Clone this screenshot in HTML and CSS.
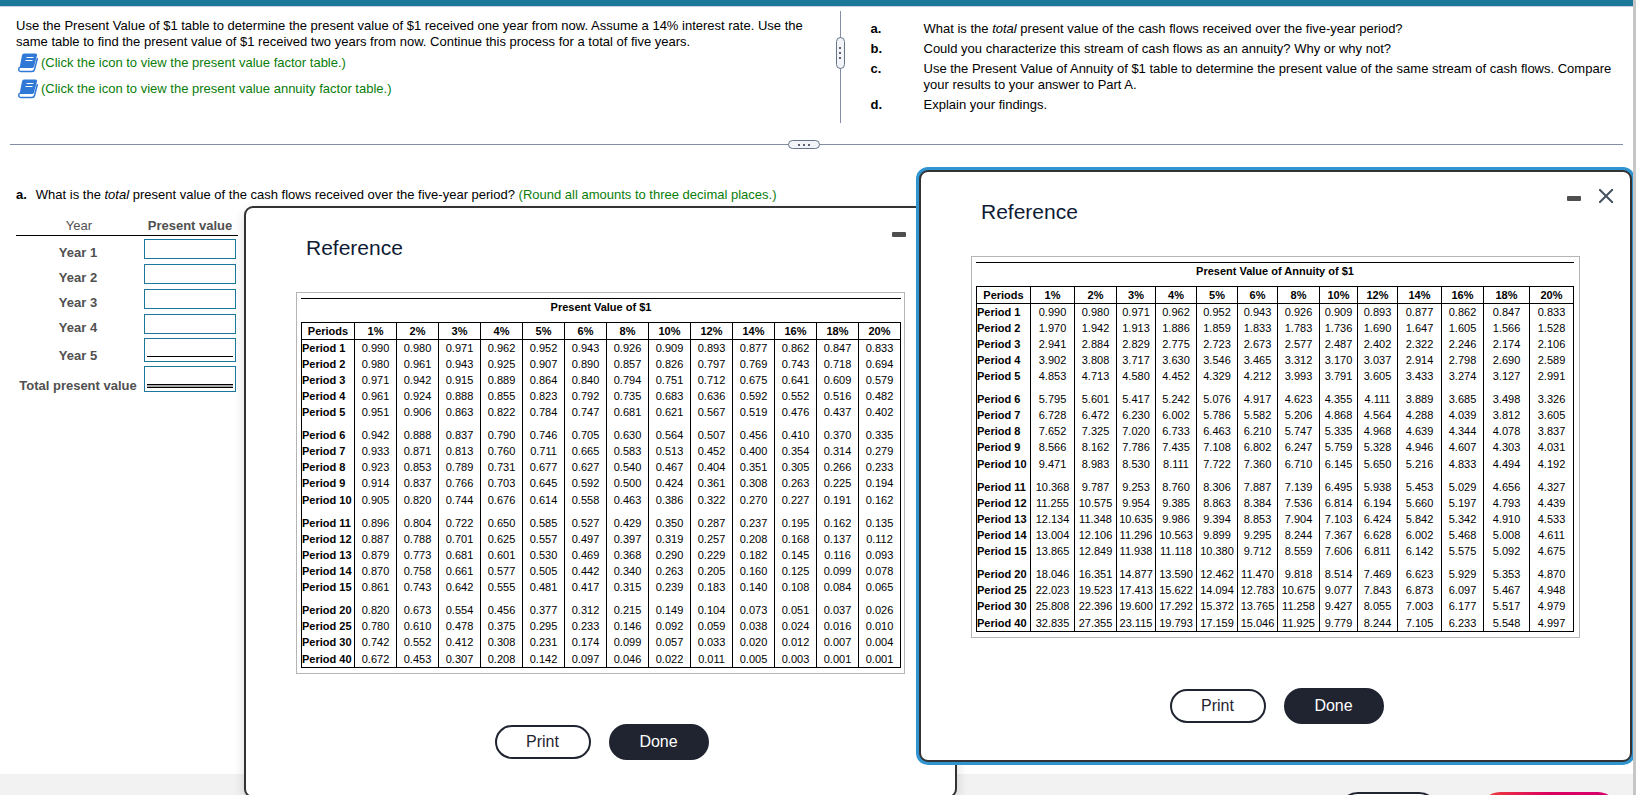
FILE: index.html
```html
<!DOCTYPE html>
<html lang="en">

<head>
  <meta charset="utf-8">
  <title>Present Value</title>
  <link rel="stylesheet" href="styles.css">
</head>

<body>
  <div class="page">
    <div class="topbar"></div>

    <div class="intro">
      <div class="intro-left">
        <p>Use the Present Value of $1 table to determine the present value of $1 received one year from now. Assume a 14% interest rate. Use the same table to find the present value of $1 received two years from now. Continue this process for a total of five years.</p>
        <a class="ref-link" href="#pv">
          <svg class="book" viewBox="0 0 20 20">
            <path d="M6 .5h11.500q2 0 1.500 2L16 13.500q-.5 1.500-2 1.500H1.500L4 2.500Q4.500.5 6 .5z" fill="#2f78d6"/>
            <path d="M1.500 14q-2 4.500 1.500 4.500h11q2 0 2.500-2L19.500 5" fill="none" stroke="#2f78d6" stroke-width="1.500"/>
            <path d="M8.500 4.500h7M7.500 7.500h7" stroke="#fff" stroke-width="1"/>
          </svg>
          <span>(Click the icon to view the present value factor table.)</span>
        </a>
        <a class="ref-link" href="#annuity">
          <svg class="book" viewBox="0 0 20 20">
            <path d="M6 .5h11.500q2 0 1.500 2L16 13.500q-.5 1.500-2 1.500H1.500L4 2.500Q4.500.5 6 .5z" fill="#2f78d6"/>
            <path d="M1.500 14q-2 4.500 1.500 4.500h11q2 0 2.500-2L19.500 5" fill="none" stroke="#2f78d6" stroke-width="1.500"/>
            <path d="M8.500 4.500h7M7.500 7.500h7" stroke="#fff" stroke-width="1"/>
          </svg>
          <span>(Click the icon to view the present value annuity factor table.)</span>
        </a>
      </div>
      <div class="split-v">
        <button class="handle-v" aria-label="Resize columns"><i></i><i></i><i></i></button>
      </div>
      <div class="intro-right">
        <b>a.</b>
        <span>What is the <em>total</em> present value of the cash flows received over the five-year period?</span>
        <b>b.</b>
        <span>Could you characterize this stream of cash flows as an annuity? Why or why not?</span>
        <b>c.</b>
        <span>Use the Present Value of Annuity of $1 table to determine the present value of the same stream of cash flows. Compare your results to your answer to Part A.</span>
        <b>d.</b>
        <span>Explain your findings.</span>
      </div>
    </div>

    <div class="split-h">
      <button class="handle-h" aria-label="Resize rows"><i></i><i></i><i></i></button>
    </div>

    <div class="work">
      <p class="question"><b>a.</b><span>What is the <em>total</em> present value of the cash flows received over the five-year period? <span class="hint">(Round all amounts to three decimal places.)</span></span></p>
      <table class="answers">
        <thead>
          <tr><th class="year-head">Year</th><th>Present value</th></tr>
        </thead>
        <tbody>
          <tr><th><label for="y1">Year 1</label></th><td><div class="box"><input type="text" id="y1"></div></td></tr>
          <tr><th><label for="y2">Year 2</label></th><td><div class="box"><input type="text" id="y2"></div></td></tr>
          <tr><th><label for="y3">Year 3</label></th><td><div class="box"><input type="text" id="y3"></div></td></tr>
          <tr><th><label for="y4">Year 4</label></th><td><div class="box"><input type="text" id="y4"></div></td></tr>
          <tr><th><label for="y5">Year 5</label></th><td><div class="box single"><input type="text" id="y5"></div></td></tr>
          <tr><th><label for="total">Total present value</label></th><td><div class="box double"><input type="text" id="total"></div></td></tr>
        </tbody>
      </table>
    </div>

    <div class="footer">
      <button class="foot-btn" aria-label="Clear all"></button>
      <button class="foot-btn check" aria-label="Check answer"></button>
    </div>
  </div>

  <div class="dialog dialog-pv" id="pv">
    <div class="dialog-head">
      <h2>Reference</h2>
      <button class="icon-btn" aria-label="Minimize"><svg width="14" height="14"><rect y="7" width="14" height="5" rx="1" fill="#4f4f4f"/></svg></button>
      <button class="icon-btn" aria-label="Close"><svg width="14" height="14"><path d="M0 0l14 14M14 0L0 14" stroke="#465260" stroke-width="2"/></svg></button>
    </div>
    <div class="sheet">
      <table class="factors" id="pvTable"></table>
    </div>
    <div class="dialog-foot">
      <button class="btn">Print</button>
      <button class="btn done">Done</button>
    </div>
  </div>

  <div class="dialog dialog-annuity" id="annuity">
    <div class="dialog-head">
      <h2>Reference</h2>
      <button class="icon-btn" aria-label="Minimize"><svg width="14" height="14"><rect y="7" width="14" height="5" rx="1" fill="#4f4f4f"/></svg></button>
      <button class="icon-btn" aria-label="Close"><svg width="14" height="14"><path d="M0 0l14 14M14 0L0 14" stroke="#465260" stroke-width="2"/></svg></button>
    </div>
    <div class="sheet">
      <table class="factors" id="annuityTable"></table>
    </div>
    <div class="dialog-foot">
      <button class="btn">Print</button>
      <button class="btn done">Done</button>
    </div>
  </div>

  <script src="script.js"></script>
</body>

</html>
```
FILE: styles.css
```css
body {
  margin: 0;
  height: 100vh;
  overflow: hidden;
  position: relative;
  background-color: #fff;
  color: #000;
  font-family: "Liberation Sans", Arial, sans-serif;
  font-size: 13px;
  line-height: 16px;
}

p {
  margin: 0;
}

button,
input {
  font-family: inherit;
  box-sizing: border-box;
  padding: 0;
  margin: 0;
}

.page {
  height: 100vh;
  box-sizing: border-box;
  border-right: 3px solid #c6c6c6;
  display: flex;
  flex-direction: column;
}

.topbar {
  height: 6px;
  background-color: #1c7899;
  border-bottom: 1px solid #c9cfe0;
}

/* problem text */
.intro {
  display: grid;
  grid-template-columns: calc(50% + 19px) 9px 1fr;
  min-height: 112px;
  margin: 4px 0 17px;
}

.intro-left {
  padding: 7px 28px 0 16px;
}

.ref-link {
  display: flex;
  align-items: center;
  gap: 3px;
  height: 26px;
  padding-left: 2px;
  color: #0a7d0a;
  text-decoration: none;
}

.book {
  width: 20px;
  height: 20px;
}

.intro-right {
  display: grid;
  grid-template-columns: 53px 1fr;
  gap: 4px 0;
  align-content: start;
  padding: 10px 18px 0 26px;
}

.split-v {
  display: flex;
  justify-content: center;
  background: linear-gradient(#848da3, #848da3) center / 1px 100% no-repeat;
}

.split-h {
  display: flex;
  justify-content: center;
  margin: 0 10px;
  padding-right: 26px;
  background: linear-gradient(#848da3, #848da3) center / 100% 1px no-repeat;
}

.handle-v,
.handle-h {
  display: flex;
  align-items: center;
  justify-content: center;
  gap: 3px;
  border: 1px solid #66758a;
  border-radius: 5px;
  background-color: #f2f4f8;
}

.handle-v {
  flex-direction: column;
  width: 9px;
  height: 32px;
  margin-top: 26px;
}

.handle-h {
  width: 32px;
  height: 9px;
}

.handle-v i,
.handle-h i {
  width: 2px;
  height: 2px;
  background-color: #5b6474;
}

/* answer area */
.work {
  flex: 1;
  padding: 38px 16px 0;
}

.question {
  display: flex;
  gap: 9px;
}

.hint {
  color: #0a7d0a;
}

.answers {
  margin-top: 12px;
  border-collapse: collapse;
  color: #505050;
}

.answers th,
.answers td {
  padding: 0;
}

.answers thead th {
  height: 18px;
  padding: 2px 2px 0 0;
  border-bottom: 1px solid #000;
  vertical-align: middle;
}

.answers thead .year-head {
  font-weight: normal;
}

.answers tbody th {
  width: 128px;
  padding: 0 4px 0 0;
  box-sizing: border-box;
  vertical-align: bottom;
}

.answers tbody td {
  height: 25px;
  padding: 0 2px 0 0;
}

.box {
  width: 92px;
  height: 20px;
  box-sizing: border-box;
  border: 1px solid #1c7899;
  padding: 0 2px;
}

.box input {
  display: block;
  width: 100%;
  height: 18px;
  border: 0;
  outline: none;
}

.single {
  height: 24px;
  margin: 2px 0;
}

.double {
  height: 26px;
  margin: 2px 0;
}

.single input,
.double input {
  border-bottom: 1px solid #000;
}

.double input {
  box-shadow: 0 2px 0 #aaa, 0 3px 0 #000;
}

.footer {
  display: flex;
  justify-content: flex-end;
  gap: 41px;
  height: 21px;
  overflow: hidden;
  box-sizing: border-box;
  padding: 18px 15px 0;
  background-color: #f2f2f2;
}

.foot-btn {
  width: 101px;
  height: 40px;
  border: 2px solid #1f2430;
  border-radius: 20px;
  background-color: #fff;
}

.check {
  width: 138px;
  border: 0;
  background: linear-gradient(90deg, #f0443a, #db0060 50%, #d6006e);
}

/* reference windows */
.dialog {
  position: absolute;
  width: 713px;
  box-sizing: border-box;
  border: 2px solid #333;
  border-radius: 9px;
  background-color: #fff;
  box-shadow: 0 5px 12px rgba(0, 0, 0, 0.15);
}

.dialog-pv {
  left: 244px;
  top: 206px;
}

.dialog-annuity {
  right: 4px;
  top: 170px;
  box-shadow: 0 0 0 3px #2f94d0;
  clip-path: inset(-3px -1px -3px -3px);
}

.dialog-head {
  display: flex;
  align-items: flex-start;
  gap: 18px;
  height: 84px;
  box-sizing: border-box;
  padding: 17px 17px 0 60px;
}

.dialog-head h2 {
  flex: 1;
  margin: 11px 0 0;
  color: #0f1b35;
  font-size: 21px;
  font-weight: normal;
  line-height: 24px;
}

.icon-btn {
  width: 14px;
  height: 14px;
  border: 0;
  background: none;
  line-height: 0;
}

.sheet {
  width: 609px;
  height: 382px;
  box-sizing: border-box;
  margin-left: 50px;
  padding: 5px 4px 0;
  border: 1px solid #b5b5b5;
}

.factors {
  border-collapse: collapse;
  table-layout: fixed;
  font-size: 11px;
  line-height: 16px;
  text-align: center;
}

.factors caption {
  height: 23px;
  border-top: 1px solid #000;
  font-weight: bold;
}

.factors th,
.factors td {
  padding: 0;
  border-left: 1px solid #000;
  border-right: 1px solid #000;
}

.factors thead th {
  height: 16px;
  border: 1px solid #000;
}

.factors tbody {
  border-bottom: 1px solid #000;
}

.factors tbody th {
  text-align: left;
  white-space: nowrap;
}

.factors .gap th,
.factors .gap td {
  padding-top: 7px;
}

.factors .last th,
.factors .last td {
  padding-top: 1px;
}

.dialog-foot {
  display: flex;
  justify-content: center;
  align-items: center;
  gap: 18px;
  padding: 50px 0 36px 2px;
}

.btn {
  width: 96px;
  height: 34px;
  border: 2px solid #1f2430;
  border-radius: 18px;
  background-color: #fff;
  color: #1f2430;
  font-size: 16px;
}

.done {
  width: 100px;
  height: 36px;
  background-color: #1f2430;
  color: #fff;
}
```
FILE: script.js
```js
var rates = ["1%", "2%", "3%", "4%", "5%", "6%", "8%", "10%", "12%", "14%", "16%", "18%", "20%"];
var periods = [1, 2, 3, 4, 5, 6, 7, 8, 9, 10, 11, 12, 13, 14, 15, 20, 25, 30, 40];

var pv = [
  "0.990 0.980 0.971 0.962 0.952 0.943 0.926 0.909 0.893 0.877 0.862 0.847 0.833",
  "0.980 0.961 0.943 0.925 0.907 0.890 0.857 0.826 0.797 0.769 0.743 0.718 0.694",
  "0.971 0.942 0.915 0.889 0.864 0.840 0.794 0.751 0.712 0.675 0.641 0.609 0.579",
  "0.961 0.924 0.888 0.855 0.823 0.792 0.735 0.683 0.636 0.592 0.552 0.516 0.482",
  "0.951 0.906 0.863 0.822 0.784 0.747 0.681 0.621 0.567 0.519 0.476 0.437 0.402",
  "0.942 0.888 0.837 0.790 0.746 0.705 0.630 0.564 0.507 0.456 0.410 0.370 0.335",
  "0.933 0.871 0.813 0.760 0.711 0.665 0.583 0.513 0.452 0.400 0.354 0.314 0.279",
  "0.923 0.853 0.789 0.731 0.677 0.627 0.540 0.467 0.404 0.351 0.305 0.266 0.233",
  "0.914 0.837 0.766 0.703 0.645 0.592 0.500 0.424 0.361 0.308 0.263 0.225 0.194",
  "0.905 0.820 0.744 0.676 0.614 0.558 0.463 0.386 0.322 0.270 0.227 0.191 0.162",
  "0.896 0.804 0.722 0.650 0.585 0.527 0.429 0.350 0.287 0.237 0.195 0.162 0.135",
  "0.887 0.788 0.701 0.625 0.557 0.497 0.397 0.319 0.257 0.208 0.168 0.137 0.112",
  "0.879 0.773 0.681 0.601 0.530 0.469 0.368 0.290 0.229 0.182 0.145 0.116 0.093",
  "0.870 0.758 0.661 0.577 0.505 0.442 0.340 0.263 0.205 0.160 0.125 0.099 0.078",
  "0.861 0.743 0.642 0.555 0.481 0.417 0.315 0.239 0.183 0.140 0.108 0.084 0.065",
  "0.820 0.673 0.554 0.456 0.377 0.312 0.215 0.149 0.104 0.073 0.051 0.037 0.026",
  "0.780 0.610 0.478 0.375 0.295 0.233 0.146 0.092 0.059 0.038 0.024 0.016 0.010",
  "0.742 0.552 0.412 0.308 0.231 0.174 0.099 0.057 0.033 0.020 0.012 0.007 0.004",
  "0.672 0.453 0.307 0.208 0.142 0.097 0.046 0.022 0.011 0.005 0.003 0.001 0.001"
];

var annuity = [
  "0.990 0.980 0.971 0.962 0.952 0.943 0.926 0.909 0.893 0.877 0.862 0.847 0.833",
  "1.970 1.942 1.913 1.886 1.859 1.833 1.783 1.736 1.690 1.647 1.605 1.566 1.528",
  "2.941 2.884 2.829 2.775 2.723 2.673 2.577 2.487 2.402 2.322 2.246 2.174 2.106",
  "3.902 3.808 3.717 3.630 3.546 3.465 3.312 3.170 3.037 2.914 2.798 2.690 2.589",
  "4.853 4.713 4.580 4.452 4.329 4.212 3.993 3.791 3.605 3.433 3.274 3.127 2.991",
  "5.795 5.601 5.417 5.242 5.076 4.917 4.623 4.355 4.111 3.889 3.685 3.498 3.326",
  "6.728 6.472 6.230 6.002 5.786 5.582 5.206 4.868 4.564 4.288 4.039 3.812 3.605",
  "7.652 7.325 7.020 6.733 6.463 6.210 5.747 5.335 4.968 4.639 4.344 4.078 3.837",
  "8.566 8.162 7.786 7.435 7.108 6.802 6.247 5.759 5.328 4.946 4.607 4.303 4.031",
  "9.471 8.983 8.530 8.111 7.722 7.360 6.710 6.145 5.650 5.216 4.833 4.494 4.192",
  "10.368 9.787 9.253 8.760 8.306 7.887 7.139 6.495 5.938 5.453 5.029 4.656 4.327",
  "11.255 10.575 9.954 9.385 8.863 8.384 7.536 6.814 6.194 5.660 5.197 4.793 4.439",
  "12.134 11.348 10.635 9.986 9.394 8.853 7.904 7.103 6.424 5.842 5.342 4.910 4.533",
  "13.004 12.106 11.296 10.563 9.899 9.295 8.244 7.367 6.628 6.002 5.468 5.008 4.611",
  "13.865 12.849 11.938 11.118 10.380 9.712 8.559 7.606 6.811 6.142 5.575 5.092 4.675",
  "18.046 16.351 14.877 13.590 12.462 11.470 9.818 8.514 7.469 6.623 5.929 5.353 4.870",
  "22.023 19.523 17.413 15.622 14.094 12.783 10.675 9.077 7.843 6.873 6.097 5.467 4.948",
  "25.808 22.396 19.600 17.292 15.372 13.765 11.258 9.427 8.055 7.003 6.177 5.517 4.979",
  "32.835 27.355 23.115 19.793 17.159 15.046 11.925 9.779 8.244 7.105 6.233 5.548 4.997"
];

function build(id, title, rows, widths)
{
	var total = 1;
	var html = "<caption>" + title + "</caption><colgroup>";
	for (var i = 0; i < widths.length; i++) {
		total += widths[i];
		html += '<col style="width:' + widths[i] + 'px">';
	}
	html += "</colgroup><thead><tr><th>Periods</th><th>" + rates.join("</th><th>") + "</th></tr></thead><tbody>";
	for (var r = 0; r < rows.length; r++) {
		var p = periods[r];
		var cls = "";
		if (p == 6 || p == 11 || p == 20) {
			cls = "gap";
		}
		if (p == 10 || p == 40) {
			cls = "last";
		}
		html += '<tr class="' + cls + '"><th>Period ' + p + "</th><td>" + rows[r].split(" ").join("</td><td>") + "</td></tr>";
	}
	var table = document.getElementById(id);
	table.style.width = total + "px";
	table.innerHTML = html + "</tbody>";
}

build("pvTable", "Present Value of $1", pv, [53, 42, 42, 42, 42, 42, 42, 42, 42, 42, 42, 42, 42, 42]);
build("annuityTable", "Present Value of Annuity of $1", annuity, [54, 44, 42, 39, 41, 41, 40, 42, 38, 40, 44, 42, 46, 44]);
```
